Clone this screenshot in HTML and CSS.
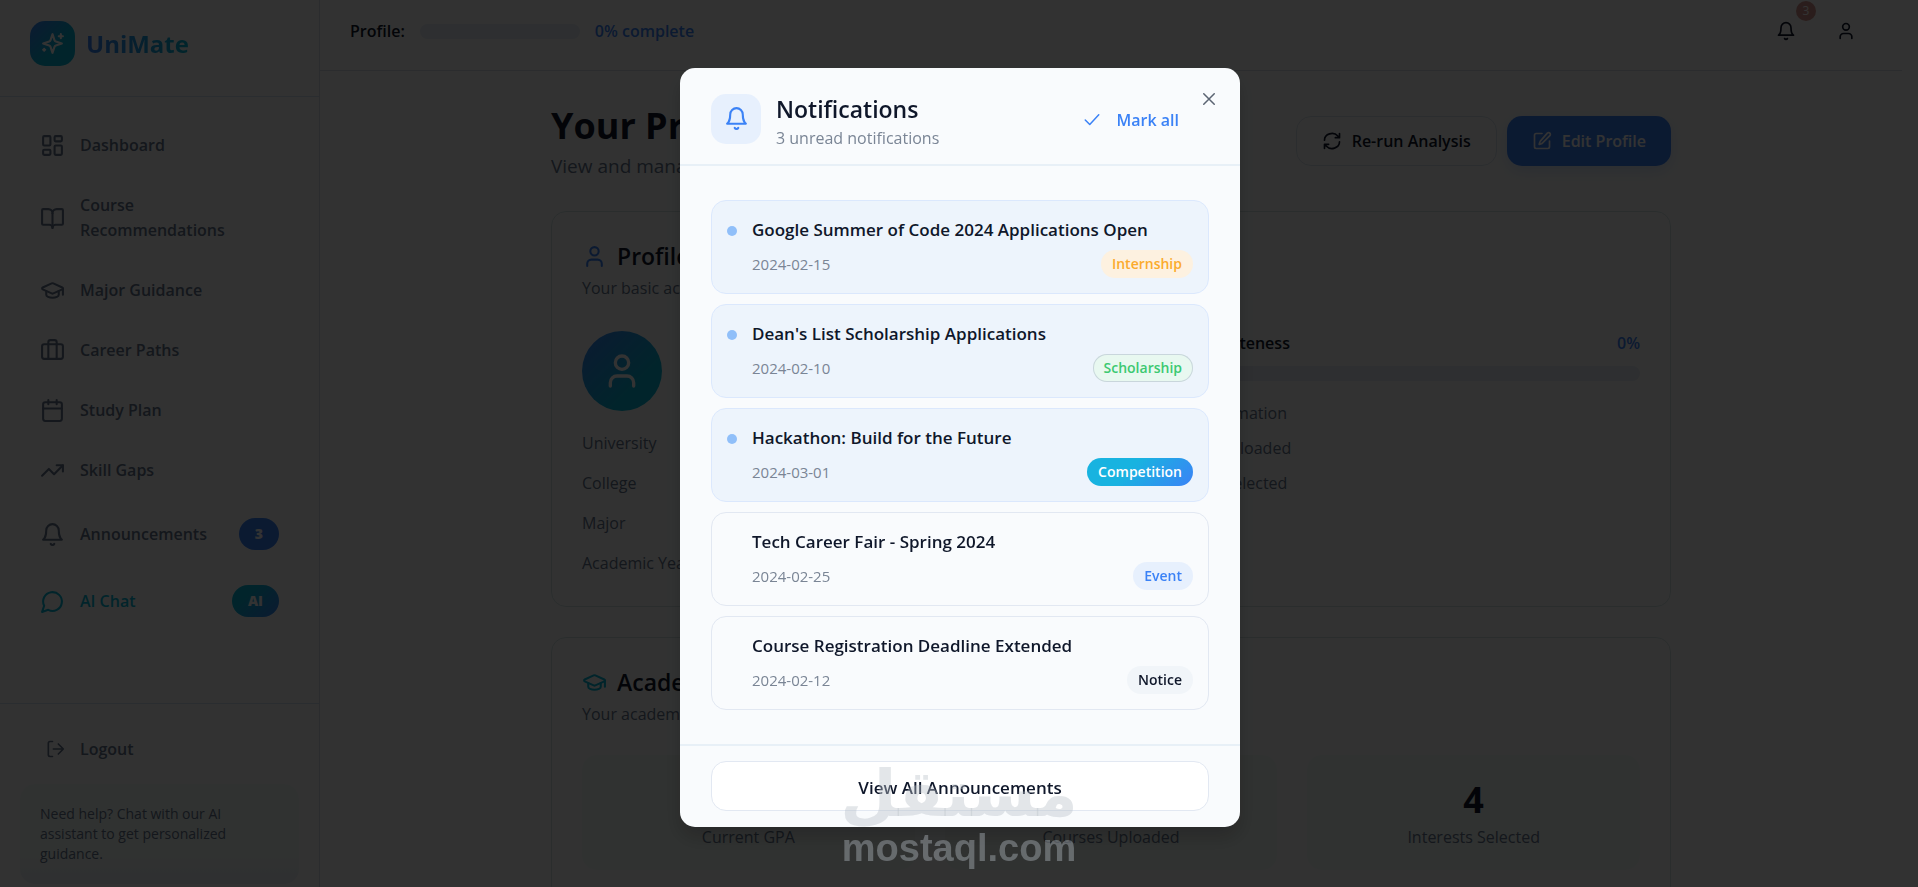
FILE: index.html
```
<!DOCTYPE html>
<html lang="en">
<head>
<meta charset="UTF-8">
<meta name="viewport" content="width=device-width, initial-scale=1.0">
<title>UniMate - Your Profile</title>
<link rel="stylesheet" href="styles.css">
</head>
<body>
<svg class="sprite" aria-hidden="true">
    <symbol id="i-sparkles" viewBox="0 0 24 24"><path d="M12 3 10.1 8.8a2 2 0 0 1-1.3 1.3L3 12l5.8 1.9a2 2 0 0 1 1.3 1.3L12 21l1.9-5.8a2 2 0 0 1 1.3-1.3L21 12l-5.8-1.9a2 2 0 0 1-1.3-1.3Z"/><path d="M20 3v4M22 5h-4M4 17v2M5 18H3"/></symbol>
    <symbol id="i-dashboard" viewBox="0 0 24 24"><rect width="7" height="9" x="3" y="3" rx="1"/><rect width="7" height="5" x="14" y="3" rx="1"/><rect width="7" height="9" x="14" y="12" rx="1"/><rect width="7" height="5" x="3" y="16" rx="1"/></symbol>
    <symbol id="i-book" viewBox="0 0 24 24"><path d="M12 7v14"/><path d="M3 18a1 1 0 0 1-1-1V4a1 1 0 0 1 1-1h5a4 4 0 0 1 4 4 4 4 0 0 1 4-4h5a1 1 0 0 1 1 1v13a1 1 0 0 1-1 1h-6a3 3 0 0 0-3 3 3 3 0 0 0-3-3z"/></symbol>
    <symbol id="i-cap" viewBox="0 0 24 24"><path d="M21.4 10.9a1 1 0 0 0 0-1.8l-8.6-3.9a2 2 0 0 0-1.6 0l-8.6 3.9a1 1 0 0 0 0 1.8l8.6 3.9a2 2 0 0 0 1.6 0z"/><path d="M22 10v6M6 12.5V16a6 3 0 0 0 12 0v-3.5"/></symbol>
    <symbol id="i-case" viewBox="0 0 24 24"><path d="M16 20V4a2 2 0 0 0-2-2h-4a2 2 0 0 0-2 2v16"/><rect width="20" height="14" x="2" y="6" rx="2"/></symbol>
    <symbol id="i-calendar" viewBox="0 0 24 24"><path d="M8 2v4M16 2v4M3 10h18"/><rect width="18" height="18" x="3" y="4" rx="2"/></symbol>
    <symbol id="i-trend" viewBox="0 0 24 24"><path d="m22 7-8.5 8.5-5-5L2 17"/><path d="M16 7h6v6"/></symbol>
    <symbol id="i-bell" viewBox="0 0 24 24"><path d="M6 8a6 6 0 0 1 12 0c0 7 3 9 3 9H3s3-2 3-9"/><path d="M10.3 21a1.94 1.94 0 0 0 3.4 0"/></symbol>
    <symbol id="i-chat" viewBox="0 0 24 24"><path d="M7.9 20A9 9 0 1 0 4 16.1L2 22Z"/></symbol>
    <symbol id="i-logout" viewBox="0 0 24 24"><path d="M9 3H6a2 2 0 0 0-2 2v14a2 2 0 0 0 2 2h3M10 12h12M16 6l6 6-6 6"/></symbol>
    <symbol id="i-user" viewBox="0 0 24 24"><path d="M19 21v-2a4 4 0 0 0-4-4H9a4 4 0 0 0-4 4v2"/><circle cx="12" cy="7" r="4"/></symbol>
    <symbol id="i-refresh" viewBox="0 0 24 24"><path d="M3 11a9 8 0 0 1 16-5l2 2M21 3v5h-5M21 13a9 8 0 0 1-16 5l-2-2M3 21v-5h5"/></symbol>
    <symbol id="i-edit" viewBox="0 0 24 24"><path d="M12 3H5a2 2 0 0 0-2 2v14a2 2 0 0 0 2 2h14a2 2 0 0 0 2-2v-7"/><path d="M18.4 2.6a2.1 2.1 0 0 1 3 3l-9 9a2 2 0 0 1-.9.5l-2.9.9.9-2.9a2 2 0 0 1 .5-.9z"/></symbol>
    <symbol id="i-check" viewBox="0 0 24 24"><path d="M21 5 9 18l-6-6"/></symbol>
    <symbol id="i-close" viewBox="0 0 24 24"><path d="M19 5 5 19M5 5l14 14"/></symbol>
    <symbol id="i-dot" viewBox="0 0 24 24"><circle cx="12" cy="12" r="9"/></symbol>
</svg>

<div class="app">
    <aside class="sidebar">
        <div class="brand">
            <span class="brand-logo"><svg class="icon icon-lg"><use href="#i-sparkles"/></svg></span>
            <span class="brand-name">UniMate</span>
        </div>
        <nav class="nav">
            <a class="nav-item" href="#"><svg class="icon icon-lg"><use href="#i-dashboard"/></svg><span>Dashboard</span></a>
            <a class="nav-item" href="#"><svg class="icon icon-lg"><use href="#i-book"/></svg><span>Course Recommendations</span></a>
            <a class="nav-item" href="#"><svg class="icon icon-lg"><use href="#i-cap"/></svg><span>Major Guidance</span></a>
            <a class="nav-item" href="#"><svg class="icon icon-lg"><use href="#i-case"/></svg><span>Career Paths</span></a>
            <a class="nav-item" href="#"><svg class="icon icon-lg"><use href="#i-calendar"/></svg><span>Study Plan</span></a>
            <a class="nav-item" href="#"><svg class="icon icon-lg"><use href="#i-trend"/></svg><span>Skill Gaps</span></a>
            <a class="nav-item" href="#"><svg class="icon icon-lg"><use href="#i-bell"/></svg><span>Announcements</span><b class="nav-badge">3</b></a>
            <a class="nav-item nav-item-ai" href="#"><svg class="icon icon-lg"><use href="#i-chat"/></svg><span>AI Chat</span><b class="nav-badge nav-badge-ai">AI</b></a>
        </nav>
        <div class="sidebar-footer">
            <button class="logout" type="button"><svg class="icon"><use href="#i-logout"/></svg>Logout</button>
            <p class="help">Need help? Chat with our AI assistant to get personalized guidance.</p>
        </div>
    </aside>

    <div class="main">
        <header class="topbar">
            <span class="topbar-label">Profile:</span>
            <div class="progress topbar-progress"></div>
            <span class="topbar-value">0% complete</span>
            <div class="topbar-actions">
                <button class="icon-btn" type="button" aria-label="Notifications"><svg class="icon"><use href="#i-bell"/></svg><span class="count">3</span></button>
                <button class="icon-btn" type="button" aria-label="Account"><svg class="icon"><use href="#i-user"/></svg></button>
            </div>
        </header>

        <main class="content">
            <div class="page-head">
                <div>
                    <h1>Your Profile</h1>
                    <p class="page-sub">View and manage your information</p>
                </div>
                <div class="page-actions">
                    <button class="btn btn-outline" type="button"><svg class="icon"><use href="#i-refresh"/></svg>Re-run Analysis</button>
                    <button class="btn btn-primary" type="button"><svg class="icon"><use href="#i-edit"/></svg>Edit Profile</button>
                </div>
            </div>

            <section class="card">
                <h2><svg class="icon icon-lg blue"><use href="#i-user"/></svg>Profile Overview</h2>
                <p class="card-sub">Your basic account information</p>
                <div class="overview">
                    <div>
                        <div class="avatar"><svg class="icon icon-xl"><use href="#i-user"/></svg></div>
                        <ul class="fields">
                            <li>University</li>
                            <li>College</li>
                            <li>Major</li>
                            <li>Academic Year</li>
                        </ul>
                    </div>
                    <div>
                        <div class="complete-head"><span>Profile Completeness</span><span class="blue">0%</span></div>
                        <div class="progress"></div>
                        <ul class="steps">
                            <li><svg class="icon"><use href="#i-dot"/></svg>Basic information</li>
                            <li><svg class="icon"><use href="#i-dot"/></svg>Courses uploaded</li>
                            <li><svg class="icon"><use href="#i-dot"/></svg>Interests selected</li>
                        </ul>
                    </div>
                </div>
            </section>

            <section class="card">
                <h2><svg class="icon icon-lg cyan"><use href="#i-cap"/></svg>Academic Summary</h2>
                <p class="card-sub">Your academic information</p>
                <div class="stats">
                    <div class="stat"><strong>0</strong><span>Current GPA</span></div>
                    <div class="stat"><strong>0</strong><span>Courses Uploaded</span></div>
                    <div class="stat"><strong>4</strong><span>Interests Selected</span></div>
                </div>
            </section>
        </main>
    </div>
</div>

<div class="overlay">
    <div class="modal" role="dialog" aria-modal="true" aria-labelledby="modal-title">
        <header class="modal-head">
            <span class="modal-icon"><svg class="icon icon-lg"><use href="#i-bell"/></svg></span>
            <div>
                <h2 class="modal-title" id="modal-title">Notifications</h2>
                <p class="modal-sub">3 unread notifications</p>
            </div>
            <button class="mark-all" type="button"><svg class="icon"><use href="#i-check"/></svg>Mark all</button>
            <button class="close" type="button" aria-label="Close"><svg class="icon"><use href="#i-close"/></svg></button>
        </header>
        <ul class="notices">
            <li class="notice unread">
                <h3>Google Summer of Code 2024 Applications Open</h3>
                <div class="notice-meta"><time>2024-02-15</time><span class="tag tag-internship">Internship</span></div>
            </li>
            <li class="notice unread">
                <h3>Dean's List Scholarship Applications</h3>
                <div class="notice-meta"><time>2024-02-10</time><span class="tag tag-scholarship">Scholarship</span></div>
            </li>
            <li class="notice unread">
                <h3>Hackathon: Build for the Future</h3>
                <div class="notice-meta"><time>2024-03-01</time><span class="tag tag-competition">Competition</span></div>
            </li>
            <li class="notice">
                <h3>Tech Career Fair - Spring 2024</h3>
                <div class="notice-meta"><time>2024-02-25</time><span class="tag tag-event">Event</span></div>
            </li>
            <li class="notice">
                <h3>Course Registration Deadline Extended</h3>
                <div class="notice-meta"><time>2024-02-12</time><span class="tag">Notice</span></div>
            </li>
        </ul>
        <footer class="modal-foot">
            <button class="view-all" type="button">View All Announcements</button>
        </footer>
    </div>
</div>

<div class="watermark">
    <span class="watermark-ar" lang="ar">مستقل</span>
    <span class="watermark-en">mostaql.com</span>
</div>
</body>
</html>
```

FILE: styles.css
```
* {
    box-sizing: border-box;
}
body {
    margin: 0;
    height: 100vh;
    overflow: hidden;
    font-family: "Segoe UI", "Open Sans", "Noto Sans", sans-serif;
    font-size: 16px;
    line-height: 25px;
    color: #0f172a;
    background: #fafbfb;
}
h1, h2, h3, p, ul {
    margin: 0;
    padding: 0;
}
ul {
    list-style: none;
}
a {
    color: inherit;
    text-decoration: none;
}
button {
    font: inherit;
    color: inherit;
    background: none;
    border: none;
    padding: 0;
    cursor: pointer;
}
.sprite {
    display: none;
}
.icon {
    width: 20px;
    height: 20px;
    flex: none;
    fill: none;
    stroke: currentColor;
    stroke-width: 2;
    stroke-linecap: round;
    stroke-linejoin: round;
}
.icon-lg {
    width: 25px;
    height: 25px;
}
.icon-xl {
    width: 40px;
    height: 40px;
}
.blue {
    color: #3b82f6;
}
.cyan {
    color: #06b6d4;
}
.app {
    display: flex;
    height: 100vh;
}

/* sidebar */
.sidebar {
    display: flex;
    flex-direction: column;
    width: 320px;
    flex: none;
    border-right: 1px solid #d5dce6;
}
.brand {
    display: flex;
    align-items: center;
    gap: 11px;
    padding: 21px 30px 30px;
    border-bottom: 1px solid #cfdfee;
}
.brand-logo {
    display: grid;
    place-items: center;
    width: 45px;
    height: 45px;
    border-radius: 15px;
    color: #fff;
    background: linear-gradient(135deg, #3b82f6, #06b6d4 60%);
}
.brand-name {
    font-size: 24px;
    font-weight: 700;
    background: linear-gradient(90deg, #3b82f6, #06b6d4);
    background-clip: text;
    color: transparent;
}
.nav {
    display: flex;
    flex-direction: column;
    gap: 5px;
    padding: 21px 20px;
    flex: 1;
}
.nav-item {
    display: flex;
    align-items: center;
    gap: 15px;
    padding: 15px 20px;
    font-weight: 600;
    color: #64748b;
}
.nav-item-ai {
    color: #06b6d4;
}
.nav-badge {
    margin-left: auto;
    padding: 0 16px;
    border-radius: 16px;
    font-size: 14px;
    line-height: 32px;
    color: #fff;
    background: #3b82f6;
}
.nav-badge-ai {
    background: linear-gradient(135deg, #06b6d4 30%, #3b82f6);
}
.sidebar-footer {
    padding: 20px 20px 3px;
    border-top: 1px solid #cfdfee;
}
.logout {
    display: flex;
    align-items: center;
    gap: 15px;
    width: 100%;
    height: 50px;
    padding: 0 25px;
    font-weight: 600;
    color: #64748b;
}
.help {
    margin-top: 10px;
    padding: 20px;
    border-radius: 15px;
    font-size: 14px;
    line-height: 20px;
    color: #64748b;
    background: linear-gradient(#f1f8f6 70%, #e8edf4);
}

/* main */
.main {
    flex: 1;
    min-width: 0;
    padding-right: 16px;
}
.topbar {
    display: flex;
    align-items: center;
    gap: 15px;
    height: 71px;
    padding: 0 46px 8px 30px;
    border-bottom: 1px solid #d5dce6;
}
.topbar-label {
    font-weight: 600;
}
.topbar-value {
    font-weight: 600;
    color: #3b82f6;
}
.progress {
    height: 15px;
    border-radius: 8px;
    background: #e4eaf3;
}
.topbar-progress {
    width: 160px;
}
.topbar-actions {
    display: flex;
    gap: 40px;
    margin-left: auto;
}
.icon-btn {
    position: relative;
    display: flex;
}
.count {
    position: absolute;
    top: -20px;
    right: -20px;
    width: 20px;
    height: 20px;
    border-radius: 10px;
    font-size: 12px;
    line-height: 20px;
    color: #fff;
    background: #d0938a;
}
.content {
    max-width: 1120px;
    margin: 0 auto;
    padding-top: 30px;
}
.page-head {
    display: flex;
    align-items: center;
    justify-content: space-between;
    margin-bottom: 30px;
}
h1 {
    font-size: 36px;
    line-height: 50px;
}
.page-sub {
    font-size: 19px;
    line-height: 30px;
    color: #64748b;
}
.page-actions {
    display: flex;
    gap: 10px;
}
.btn {
    display: flex;
    align-items: center;
    gap: 10px;
    height: 50px;
    padding: 0 25px;
    border-radius: 15px;
    font-weight: 600;
}
.btn-outline {
    border: 1px solid #d8e1ea;
}
.btn-primary {
    color: #fff;
    background: #3b82f6;
    box-shadow: 0 5px 15px rgba(59, 130, 246, 0.2);
}
.card {
    margin-bottom: 30px;
    padding: 30px;
    border: 1px solid #d3e2e2;
    border-radius: 15px;
}
.card h2 {
    display: flex;
    align-items: center;
    gap: 10px;
    font-size: 23px;
    line-height: 28px;
    font-weight: 600;
}
.card-sub {
    margin-top: 6px;
    color: #64748b;
}
.overview {
    display: grid;
    grid-template-columns: 1fr 1fr;
    gap: 30px;
    margin-top: 30px;
}
.avatar {
    display: grid;
    place-items: center;
    width: 80px;
    height: 80px;
    border-radius: 50%;
    color: #fff;
    background: linear-gradient(135deg, #3b82f6, #06b6d4 70%);
}
.fields {
    display: grid;
    gap: 15px;
    margin-top: 20px;
    color: #64748b;
}
.complete-head {
    display: flex;
    justify-content: space-between;
    margin-bottom: 10px;
    font-weight: 600;
}
.steps {
    display: grid;
    gap: 10px;
    margin-top: 20px;
    color: #64748b;
}
.steps li {
    display: flex;
    align-items: center;
    gap: 10px;
}
.stats {
    display: grid;
    grid-template-columns: repeat(3, 1fr);
    gap: 30px;
    margin-top: 28px;
}
.stat {
    display: grid;
    padding: 20px;
    border-radius: 15px;
    text-align: center;
    color: #64748b;
    background: #f0f7f5;
}
.stat strong {
    font-size: 36px;
    line-height: 50px;
    color: #0f172a;
}

/* notifications modal */
.overlay {
    position: fixed;
    inset: 0;
    display: flex;
    align-items: center;
    justify-content: center;
    padding: 7px 0 0 2px;
    background: rgba(0, 0, 0, 0.8);
}
.modal {
    position: relative;
    width: 560px;
    border-radius: 15px;
    background: #f9fbfd;
    box-shadow: 0 10px 20px rgba(0, 0, 0, 0.2);
}
.modal-head {
    display: flex;
    align-items: flex-start;
    gap: 15px;
    padding: 26px 31px 13px;
    border-bottom: 2px solid #e8f0f7;
}
.modal-icon {
    display: grid;
    place-items: center;
    width: 50px;
    height: 50px;
    border-radius: 15px;
    color: #3b82f6;
    background: #e7f0fd;
}
.modal-title {
    font-size: 23px;
    line-height: 30px;
    font-weight: 600;
}
.modal-sub {
    margin-top: 2px;
    line-height: 25px;
    color: #7a8595;
}
.mark-all {
    display: flex;
    align-items: center;
    gap: 16px;
    margin: 14px 30px 0 auto;
    font-weight: 600;
    color: #3b82f6;
}
.mark-all .icon,
.close .icon {
    width: 18px;
    height: 18px;
}
.close {
    position: absolute;
    top: 22px;
    right: 22px;
    display: flex;
    color: #5b6472;
}
.notices {
    display: grid;
    gap: 10px;
    padding: 34px 31px;
}
.notice {
    position: relative;
    padding: 15px 15px 15px 40px;
    border: 1px solid #e2e8f2;
    border-radius: 15px;
}
.unread {
    border-color: #dbe8fd;
    background: #edf4fc;
}
.unread::before {
    content: "";
    position: absolute;
    top: 25px;
    left: 15px;
    width: 10px;
    height: 10px;
    border-radius: 50%;
    background: #90bff9;
}
.notice h3 {
    margin-bottom: 6px;
    font-size: 17px;
    line-height: 28px;
    font-weight: 600;
}
.notice-meta {
    display: flex;
    align-items: center;
    justify-content: space-between;
    font-size: 15px;
    line-height: 28px;
    color: #7a8595;
}
.tag {
    padding: 0 11px;
    border-radius: 14px;
    font-size: 14px;
    font-weight: 600;
    color: #0f172a;
    background: #f1f5f9;
}
.tag-internship {
    color: #fbab2c;
    background: #fdf1e0;
}
.tag-scholarship {
    color: #3cc971;
    background: #e8f8f0;
    box-shadow: inset 0 0 0 1px #c9d6dc;
}
.tag-competition {
    color: #fff;
    background: linear-gradient(135deg, #18b3e0 40%, #3b82f6);
}
.tag-event {
    color: #3b82f6;
    background: #e7f0fd;
}
.modal-foot {
    padding: 15px 31px 16px;
    border-top: 2px solid #e8f0f7;
}
.view-all {
    width: 100%;
    height: 50px;
    padding-top: 3px;
    border: 1px solid #e2e8f2;
    border-radius: 15px;
    font-size: 17px;
    font-weight: 600;
    background: #fff;
}

/* watermark */
.watermark {
    position: fixed;
    left: 0;
    right: 0;
    bottom: 17px;
    display: flex;
    flex-direction: column;
    align-items: center;
    font-weight: 700;
    color: rgba(186, 192, 200, 0.4);
    pointer-events: none;
}
.watermark-ar {
    font-family: "DejaVu Sans", sans-serif;
    font-size: 65px;
    line-height: 64px;
}
.watermark-en {
    font-family: "Liberation Sans", Arial, sans-serif;
    font-size: 38px;
    line-height: 44px;
}
```
